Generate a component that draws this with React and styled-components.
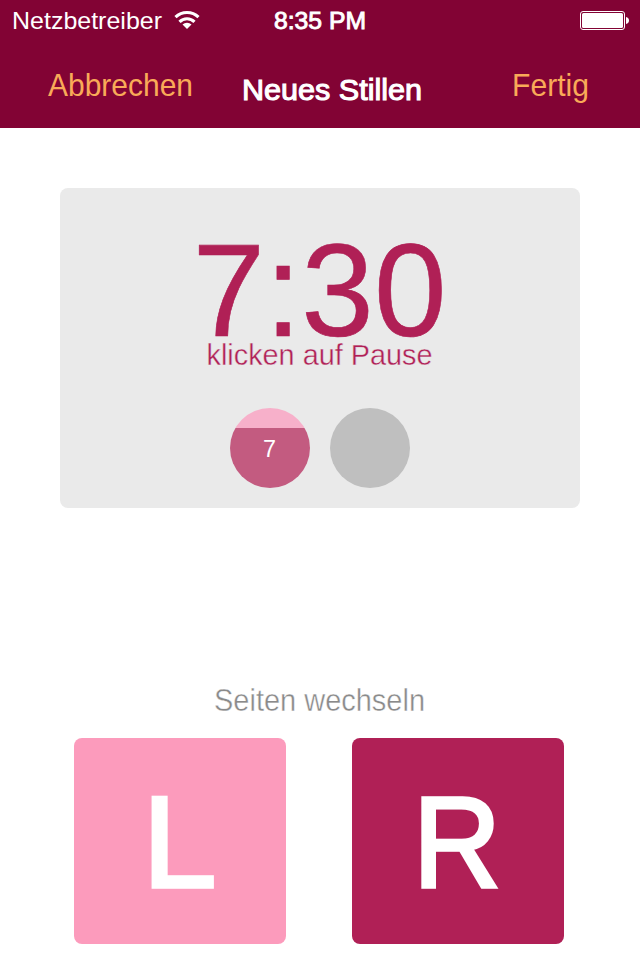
import React from "react";
import styled, { createGlobalStyle } from "styled-components";

const Global = createGlobalStyle`
  *{box-sizing:border-box}
  body{margin:0;background:#fff;font-family:"Liberation Sans",Arial,sans-serif}
`;
const Screen = styled.main`width:640px;height:960px;overflow:hidden;display:flex;flex-direction:column;background:#fff;`;
const Header = styled.header`height:128px;background:#820334;color:#fff;`;
const StatusBar = styled.div`height:40px;display:grid;grid-template-columns:1fr auto 1fr;align-items:center;padding:0 11px 0 12px;`;
const Carrier = styled.div`display:flex;align-items:center;gap:12px;`;
const Label = styled.svg`display:block;overflow:visible;font-family:"Liberation Sans",Arial,sans-serif;`;
const Battery = styled.svg`justify-self:end;`;
const NavBar = styled.nav`height:88px;display:grid;grid-template-columns:194px 1fr auto;padding:26px 52px 0 48px;`;
const NavTitle = styled.h1`margin:0;padding-top:4px;`;
const Body = styled.div`flex:1;display:flex;flex-direction:column;align-items:center;padding-top:60px;`;
const TimerCard = styled.section`width:520px;height:320px;border-radius:8px;background:#eaeaea;display:flex;flex-direction:column;align-items:center;padding-top:50px;`;
const Circles = styled.div`display:flex;gap:20px;margin-top:36px;`;
const Circle = styled.div`width:80px;height:80px;border-radius:50%;display:flex;align-items:center;justify-content:center;padding-right:2px;color:#fff;background:${p => p.$active ? "linear-gradient(#f7b0ca 0 20px,#c35b80 20px)" : "#bfbfbf"};`;
const SwitchTitle = styled.div`margin:180px 2px 0 0;`;
const Sides = styled.div`display:flex;gap:66px;margin:20px 2px 0 0;`;
const SideButton = styled.button`width:212px;height:206px;border:0;padding:0;border-radius:8px;background:${p => p.$bg};color:#fff;display:flex;align-items:center;justify-content:center;`;

function Text({ children, width, height, size, baseline, color = "#fff", outline = "none", outlineWidth = 0, x = 0 }) {
  return <Label width={width} height={height}>
    <text x={x} y={baseline} fontSize={size} fontWeight={400} fill={color} stroke={outline} strokeWidth={outlineWidth} textLength={width} lengthAdjust="spacingAndGlyphs">{children}</text>
  </Label>;
}

export default function App() {
  return <><Global /><Screen>
    <Header>
      <StatusBar>
        <Carrier><Text width={150} height={28} size={24} baseline={23}>Netzbetreiber</Text>
          <svg width="26" height="20" viewBox="0 0 26 20" fill="none" stroke="#fff" strokeWidth="3.1"><path d="M1.5 7.2a16.5 16.5 0 0 1 23 0M5.5 11.8a10.6 10.6 0 0 1 15 0" /><path d="M13 19l-4.5-4.4a6.4 6.4 0 0 1 9 0z" fill="#fff" stroke="none" /></svg>
        </Carrier>
        <Text width={92} height={28} size={24} baseline={23} x={-1} outline="#fff" outlineWidth={0.9}>8:35 PM</Text>
        <Battery width="49" height="20" viewBox="0 0 49 20"><rect x=".5" y="1.5" width="44" height="18" rx="2.5" fill="none" stroke="#fff" /><rect x="2" y="3" width="41" height="15" rx="1.5" fill="#fff" /><path d="M46 7q3 .7 3 3.5t-3 3.5z" fill="#fff" /></Battery>
      </StatusBar>
      <NavBar>
        <Text width={145} height={36} size={30.5} baseline={30} color="#f9aa58">Abbrechen</Text>
        <NavTitle><Text width={180} height={36} size={30} baseline={30} outline="#fff" outlineWidth={1.1}>Neues Stillen</Text></NavTitle>
        <Text width={77} height={36} size={30.5} baseline={30} x={1} color="#f9aa58">Fertig</Text>
      </NavBar>
    </Header>
    <Body>
      <TimerCard>
        <Text width={254} height={98} size={131} baseline={98} x={-0.5} color="#b02056" outline="#b02056" outlineWidth={0.6}>7:30</Text>
        <Text width={226} height={36} size={30} baseline={29} x={-0.5} color="#b02056" outline="#eaeaea" outlineWidth={0.4}>klicken auf Pause</Text>
        <Circles><Circle $active><Text width={13} height={26} size={24} baseline={22}>7</Text></Circle><Circle /></Circles>
      </TimerCard>
      <SwitchTitle><Text width={211} height={30} size={30.5} baseline={23} color="#8a8a8a" outline="#fff" outlineWidth={0.4}>Seiten wechseln</Text></SwitchTitle>
      <Sides>
        <SideButton $bg="#fc9bbc"><Text width={74} height={100} size={130} baseline={96.3} x={-0.5} outline="#fff" outlineWidth={3.5}>L</Text></SideButton>
        <SideButton $bg="#b02056"><Text width={88} height={100} size={130} baseline={96.3} x={-1} outline="#fff" outlineWidth={3.5}>R</Text></SideButton>
      </Sides>
    </Body>
  </Screen></>;
}
